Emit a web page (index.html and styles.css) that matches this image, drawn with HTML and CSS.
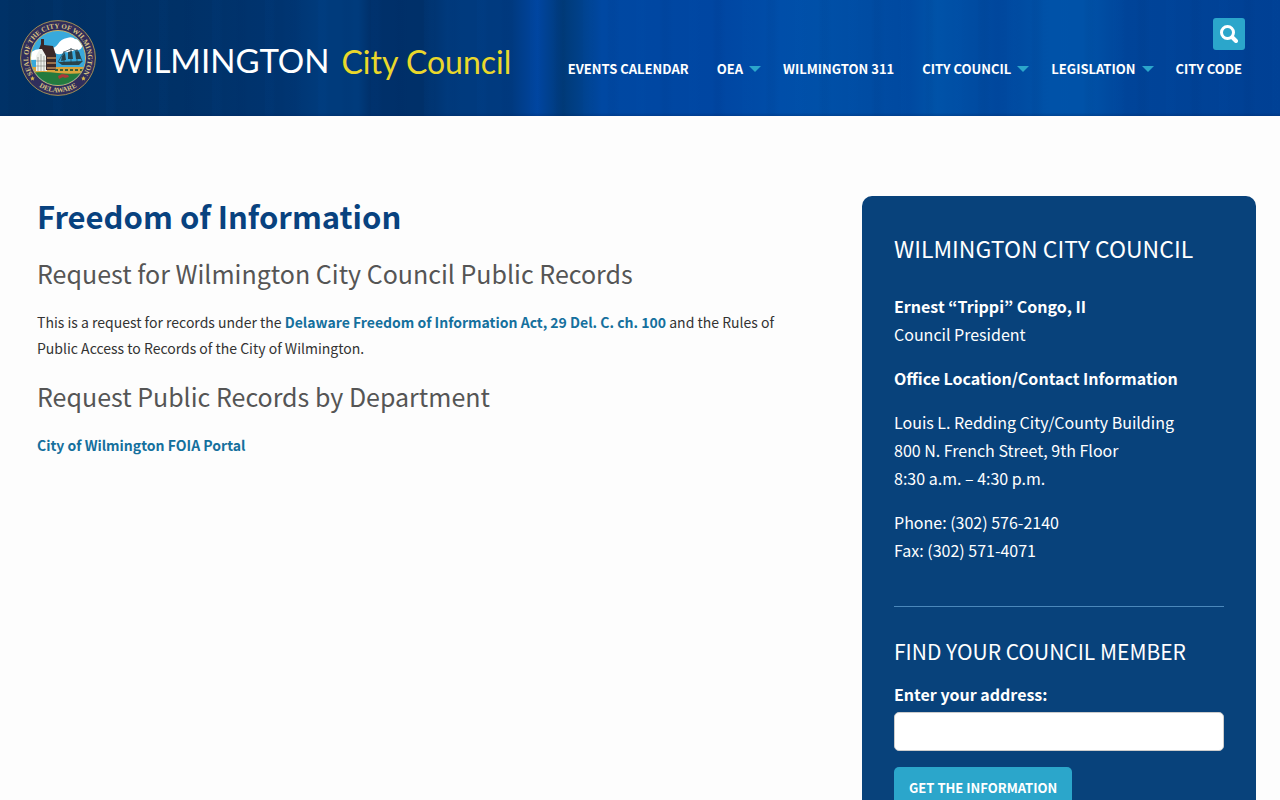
FILE: index.html
```html
<!DOCTYPE html>
<html lang="en">
<head>
<meta charset="utf-8">
<meta name="viewport" content="width=device-width, initial-scale=1">
<title>Freedom of Information - Wilmington City Council</title>
<link rel="stylesheet" href="styles.css">
</head>
<body>
<header class="site-header">
  <a class="brand" href="#">
    <svg class="seal" viewBox="0 0 76 76" role="img" aria-label="City seal">
      <defs>
        <clipPath id="scene"><circle cx="38" cy="38" r="27"/></clipPath>
        <path id="arc-top" d="M12.500 53.500A29.800 29.800 0 1 1 63.500 53.500"/>
        <path id="arc-bottom" d="M14 62.500A34.300 34.300 0 0 0 62 62.500"/>
      </defs>
      <circle cx="38" cy="38" r="37.400" fill="#302e5c" stroke="#a38f55"/>
      <circle cx="38" cy="38" r="27.500" fill="#38a9dc" stroke="#c9b36a" stroke-width="1"/>
      <g clip-path="url(#scene)">
        <path fill="#fff" d="M10 40V33q5-4 10-4 6-2 12-1 3 0 6-4 3-5 9-6 5-2 8 1 4 0 6 3 3 2 1 5-2 4-7 3-5 3-10 2-5 4-10 1l-3 6z"/>
        <path fill="#38a9dc" d="M33 37h34v12H33z"/>
        <path fill="#d9a43c" d="M9 47h58v7H9z"/>
        <path fill="#247a3e" d="M9 53q13-2 29 0t29-1v16H9z"/>
        <path fill="#f0f2ee" d="M16 51V36l5-9 6 8v16z"/>
        <path fill="#3b2929" d="M19 29l2-5v-5h3v6l9 1 3 9v15H26V36l-4-7z"/>
        <path fill="#99704b" d="M27 37h9v2h-9zM27 42h9v2h-9zM27 47h9v2h-9z"/>
        <path stroke="#7d817b" stroke-width=".6" d="M18 37v14M21 34v17M24 36v15M16 41h10M16 46h10"/>
        <path fill="#29444c" d="M38 42l25-1-4 4H42zM42 36l3-3 1 7-5 1zM48 32l4-1 1 8h-5zM55 31l4 1 2 7h-5z"/>
        <path stroke="#263c46" stroke-width=".7" fill="none" d="M44 31v13M51 28v16M57 29v14M38 42l6-10 7-3 7 2 4 10"/>
        <path stroke="#385c35" stroke-width="2" stroke-dasharray="3 2" d="M35 50h28"/>
        <path fill="#ac3939" d="M38 56l4-2 6 1 1 2-4 1-2-1-4 2z"/>
      </g>
      <text class="seal-text"><textPath href="#arc-top" startOffset="50%">SEAL OF THE CITY OF WILMINGTON</textPath></text>
      <text class="seal-text"><textPath href="#arc-bottom" startOffset="50%">DELAWARE</textPath></text>
      <path fill="#d8b54b" d="M12.500 56l.7 1.500 1.600.2-1.200 1.100.3 1.700-1.400-.8-1.500.8.3-1.700-1.100-1.100 1.600-.2zM63.500 56l.7 1.500 1.600.2-1.200 1.100.3 1.700-1.400-.8-1.500.8.3-1.700-1.100-1.100 1.600-.2z"/>
    </svg>
    <span class="brand-city">WILMINGTON</span>
    <span class="brand-council">City Council</span>
  </a>
  <div class="header-tools">
    <button class="search-button" type="button" aria-label="Search">
      <svg viewBox="0 0 18 18" width="18" height="18" aria-hidden="true"><circle cx="7.500" cy="7.500" r="6"/><path class="handle" d="M12.500 12.500l3.500 3.500"/></svg>
    </button>
    <nav class="main-nav" aria-label="Main">
      <a href="#">EVENTS CALENDAR</a>
      <a class="has-menu" href="#">OEA</a>
      <a href="#">WILMINGTON 311</a>
      <a class="has-menu" href="#">CITY COUNCIL</a>
      <a class="has-menu" href="#">LEGISLATION</a>
      <a href="#">CITY CODE</a>
    </nav>
  </div>
</header>
<div class="page">
  <main class="content">
    <h1>Freedom of Information</h1>
    <h2>Request for Wilmington City Council Public Records</h2>
    <p>This is a request for records under the <a href="#">Delaware Freedom of Information Act, 29 Del. C. ch. 100</a> and the Rules of Public Access to Records of the City of Wilmington.</p>
    <h2>Request Public Records by Department</h2>
    <p><a href="#">City of Wilmington FOIA Portal</a></p>
  </main>
  <aside class="sidebar">
    <section class="contact">
      <h2>WILMINGTON CITY COUNCIL</h2>
      <p><strong>Ernest “Trippi” Congo, II</strong><br>Council President</p>
      <p><strong>Office Location/Contact Information</strong></p>
      <p>Louis L. Redding City/County Building<br>800 N. French Street, 9th Floor<br>8:30 a.m. – 4:30 p.m.</p>
      <p>Phone: (302) 576-2140<br>Fax: (302) 571-4071</p>
    </section>
    <form class="finder">
      <h3>FIND YOUR COUNCIL MEMBER</h3>
      <label for="address">Enter your address:</label>
      <input id="address" type="text">
      <button type="submit">GET THE INFORMATION</button>
    </form>
  </aside>
</div>
</body>
</html>
```
FILE: styles.css
```css
* { box-sizing: border-box; }
body {
  margin: 0;
  background: #fdfdfd;
  color: #333;
  font-family: "Noto Sans CJK KR", "Noto Sans", sans-serif;
  font-size: 14px;
  line-height: 26px;
}
h1, h2, h3, p { margin: 0; }
a { text-decoration: none; }

.site-header {
  display: flex;
  justify-content: space-between;
  align-items: flex-start;
  padding: 18px 24px 20px 20px;
  background:
    linear-gradient(#00000000 97%, #00205840),
    repeating-linear-gradient(90deg, #0058b80c 0 7px, transparent 11px 23px, #0020580c 27px 31px, transparent 37px 53px),
    linear-gradient(90deg, #003063 0%, #003167 14%, #003470 22%, #003b7c 25%, #003b7c 28%, #00306a 29%, #003069 33%, #003a7d 35%, #003a80 40%, #0045a0 42%, #003a78 44%, #003f85 45%, #0048a2 47%, #0046a2 56%, #004ea9 61%, #0050a8 64%, #004da4 67%, #0049a0 71%, #0053a9 73%, #00479d 78%, #0052a8 82%, #0052a8 85%, #004499 88%, #004094 100%);
}
.brand { display: flex; align-items: center; padding-top: 2px; white-space: nowrap; }
.seal { width: 76px; height: 76px; margin-right: 14px; }
.seal-text { fill: #d8c483; font: bold 7px "Liberation Serif", serif; text-anchor: middle; }
#arc-top + .seal-text { font-size: 6px; }
.brand-city, .brand-council { font-family: Lato, sans-serif; line-height: 40px; }
.brand-city { color: #fff; font-size: 33px; padding-top: 4px; margin-right: 12px; }
.brand-council { color: #ead82b; font-size: 32px; padding-top: 8px; }

.header-tools { display: flex; flex-direction: column; align-items: flex-end; gap: 6px; }
.search-button {
  display: grid;
  place-items: center;
  width: 32px;
  height: 32px;
  margin-right: 11px;
  padding: 0;
  border: 0;
  border-radius: 3px;
  background: #2ba6cb;
}
.search-button svg { fill: none; stroke: #fff; stroke-width: 3; stroke-linecap: round; }
.search-button .handle { stroke-width: 4; }
.main-nav { display: flex; }
.main-nav a { padding: 0 14px; color: #fff; font-size: 13px; font-weight: 700; white-space: nowrap; }
.main-nav .has-menu { display: flex; align-items: center; gap: 6px; padding-right: 8px; }
.has-menu::after {
  content: "";
  border: solid transparent;
  border-width: 6px 6px 0;
  border-top-color: #2ba6cb;
}

.page {
  display: grid;
  grid-template-columns: minmax(0, 2fr) minmax(0, 1fr);
  gap: 37px;
  padding: 80px 24px 0 37px;
}
.content { padding-right: 24px; }
.content h1 { color: #08427f; font-size: 31px; font-weight: 700; line-height: 40px; margin-bottom: 18px; }
.content h2 { color: #555; font-size: 25px; font-weight: 400; line-height: 38px; margin-bottom: 17px; }
.content p { margin-bottom: 16px; }
.content a { color: #15709d; font-weight: 700; }

.sidebar {
  padding: 32px;
  border-radius: 10px;
  background: #08427b;
  color: #fff;
  font-size: 16px;
  line-height: 28px;
}
.sidebar h2 { font-size: 23px; font-weight: 400; line-height: 40px; margin-bottom: 24px; }
.sidebar p { margin-bottom: 16px; }
.contact { padding-bottom: 26px; border-bottom: 1px solid #4b88bb; }
.finder { padding-top: 23px; }
.finder h3 { font-size: 21px; font-weight: 400; line-height: 42px; margin-bottom: 8px; }
.finder label { display: block; font-weight: 700; }
.finder input {
  display: block;
  width: 100%;
  height: 39px;
  margin: 4px 0 16px;
  padding: 8px;
  border: 1px solid #ccc;
  border-radius: 5px;
  background: #fff;
  font: inherit;
}
.finder button {
  padding: 8px 15px;
  border: 0;
  border-radius: 5px;
  background: #2ba6cb;
  color: #fff;
  font: 700 13px/26px "Noto Sans CJK KR", sans-serif;
}
```
